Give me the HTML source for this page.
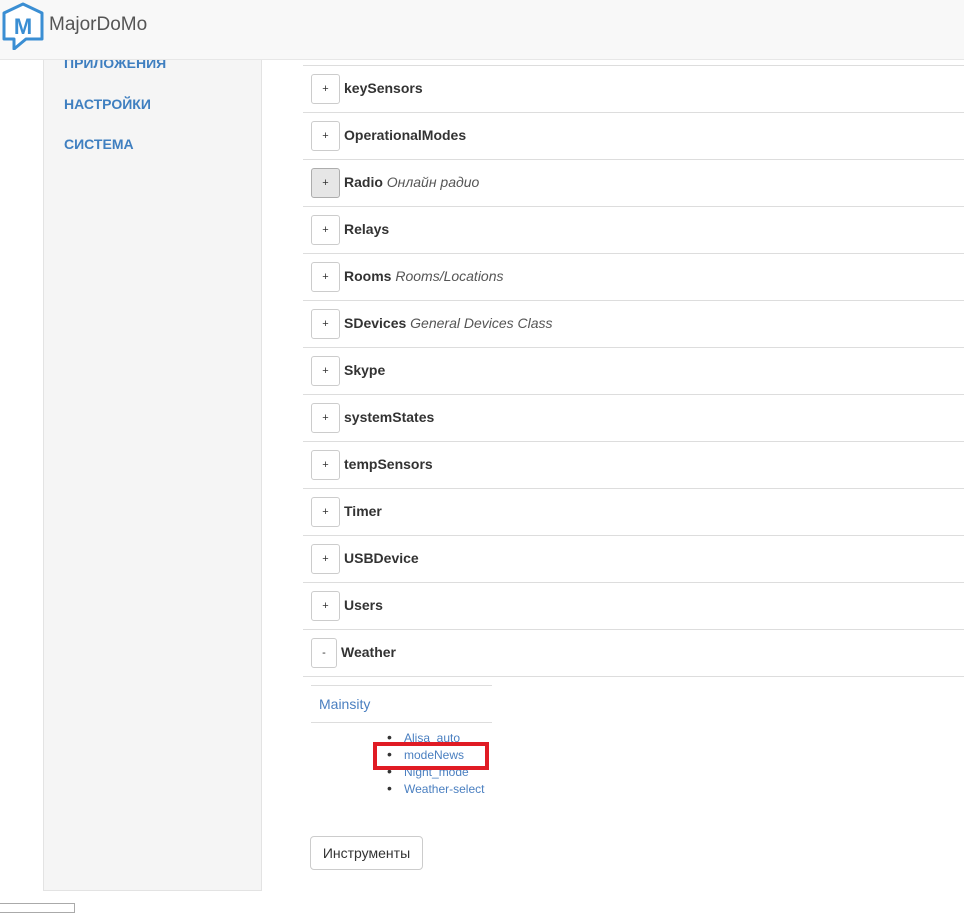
<!DOCTYPE html>
<html><head><meta charset="utf-8"><style>
*{box-sizing:border-box;margin:0;padding:0}
body{width:964px;height:910px;overflow:hidden;background:#fff;font-family:"Liberation Sans",Arial,sans-serif;font-size:14px;color:#333;position:relative}
.hdr{position:absolute;left:0;top:0;width:964px;height:60px;background:#f8f8f8;border-bottom:1px solid #e7e7e7;z-index:5}
.brand{position:absolute;left:49px;top:14px;font-size:19px;color:#555}
.side{position:absolute;left:43px;top:59px;width:219px;height:832px;background:#f5f5f5;border:1px solid #e3e3e3;border-top:none}
.side a{position:absolute;left:20px;font-weight:bold;color:#3f7fc0;font-size:14px;text-decoration:none}
.row{position:absolute;left:303px;width:661px;height:47px;border-top:1px solid #ddd}
.btn{position:absolute;left:8px;top:8px;width:29px;height:30px;border:1px solid #ccc;border-radius:3px;background:#fff;font-size:11px;text-align:center;line-height:28px;color:#333}
.row b{position:absolute;left:41px;top:14px;font-size:14px}
.row i{font-weight:normal;color:#555}
.lst{position:absolute;left:389px;font-size:12px;color:#4a7fc0}
.lst span{position:absolute;left:-2px;color:#333;font-size:14px;top:-2px}
</style></head><body>
<div class="hdr">
<svg style="position:absolute;left:2px;top:2px" width="42" height="48" viewBox="0 0 42 48"><path d="M21 2 L40 11 L40 37 L24 37 L12 47 L12 37 L2 37 L2 11 Z" fill="#fff" stroke="#3a8ed3" stroke-width="3" stroke-linejoin="round"/><text x="21" y="32" text-anchor="middle" font-family="Liberation Sans" font-weight="bold" font-size="22" fill="#3a8ed3">M</text></svg>
<div class="brand">MajorDoMo</div>
</div>
<div class="side">
<a style="top:-4px">ПРИЛОЖЕНИЯ</a>
<a style="top:37px">НАСТРОЙКИ</a>
<a style="top:77px">СИСТЕМА</a>
</div>
<div class="row" style="top:65px"><div class="btn">+</div><b>keySensors</b></div>
<div class="row" style="top:112px"><div class="btn">+</div><b>OperationalModes</b></div>
<div class="row" style="top:159px"><div class="btn" style="background:#e6e6e6;border-color:#adadad">+</div><b>Radio <i>Онлайн радио</i></b></div>
<div class="row" style="top:206px"><div class="btn">+</div><b>Relays</b></div>
<div class="row" style="top:253px"><div class="btn">+</div><b>Rooms <i>Rooms/Locations</i></b></div>
<div class="row" style="top:300px"><div class="btn">+</div><b>SDevices <i>General Devices Class</i></b></div>
<div class="row" style="top:347px"><div class="btn">+</div><b>Skype</b></div>
<div class="row" style="top:394px"><div class="btn">+</div><b>systemStates</b></div>
<div class="row" style="top:441px"><div class="btn">+</div><b>tempSensors</b></div>
<div class="row" style="top:488px"><div class="btn">+</div><b>Timer</b></div>
<div class="row" style="top:535px"><div class="btn">+</div><b>USBDevice</b></div>
<div class="row" style="top:582px"><div class="btn">+</div><b>Users</b></div>
<div class="row" style="top:629px;border-bottom:1px solid #ddd;height:48px"><div class="btn" style="width:26px">-</div><b style="left:38px">Weather</b></div>
<div style="position:absolute;left:311px;top:685px;width:181px;height:38px;border-top:1px solid #ddd;border-bottom:1px solid #ddd;color:#4a7fc0;padding:10px 8px;font-size:14px">Mainsity</div>
<div class="lst" style="top:731px;left:404px"><span style="left:-17px">•</span>Alisa_auto</div>
<div class="lst" style="top:748px;left:404px"><span style="left:-17px">•</span>modeNews</div>
<div class="lst" style="top:765px;left:404px"><span style="left:-17px">•</span>Night_mode</div>
<div class="lst" style="top:782px;left:404px"><span style="left:-17px">•</span>Weather-select</div>
<div style="position:absolute;left:373px;top:742px;width:116px;height:28px;border:4px solid #e01b24"></div>
<div style="position:absolute;left:310px;top:836px;width:113px;height:34px;border:1px solid #ccc;border-radius:4px;text-align:center;line-height:32px;font-size:14px">Инструменты</div>
<div style="position:absolute;left:-2px;top:903px;width:77px;height:10px;border:1px solid #aaa"></div>
</body></html>
